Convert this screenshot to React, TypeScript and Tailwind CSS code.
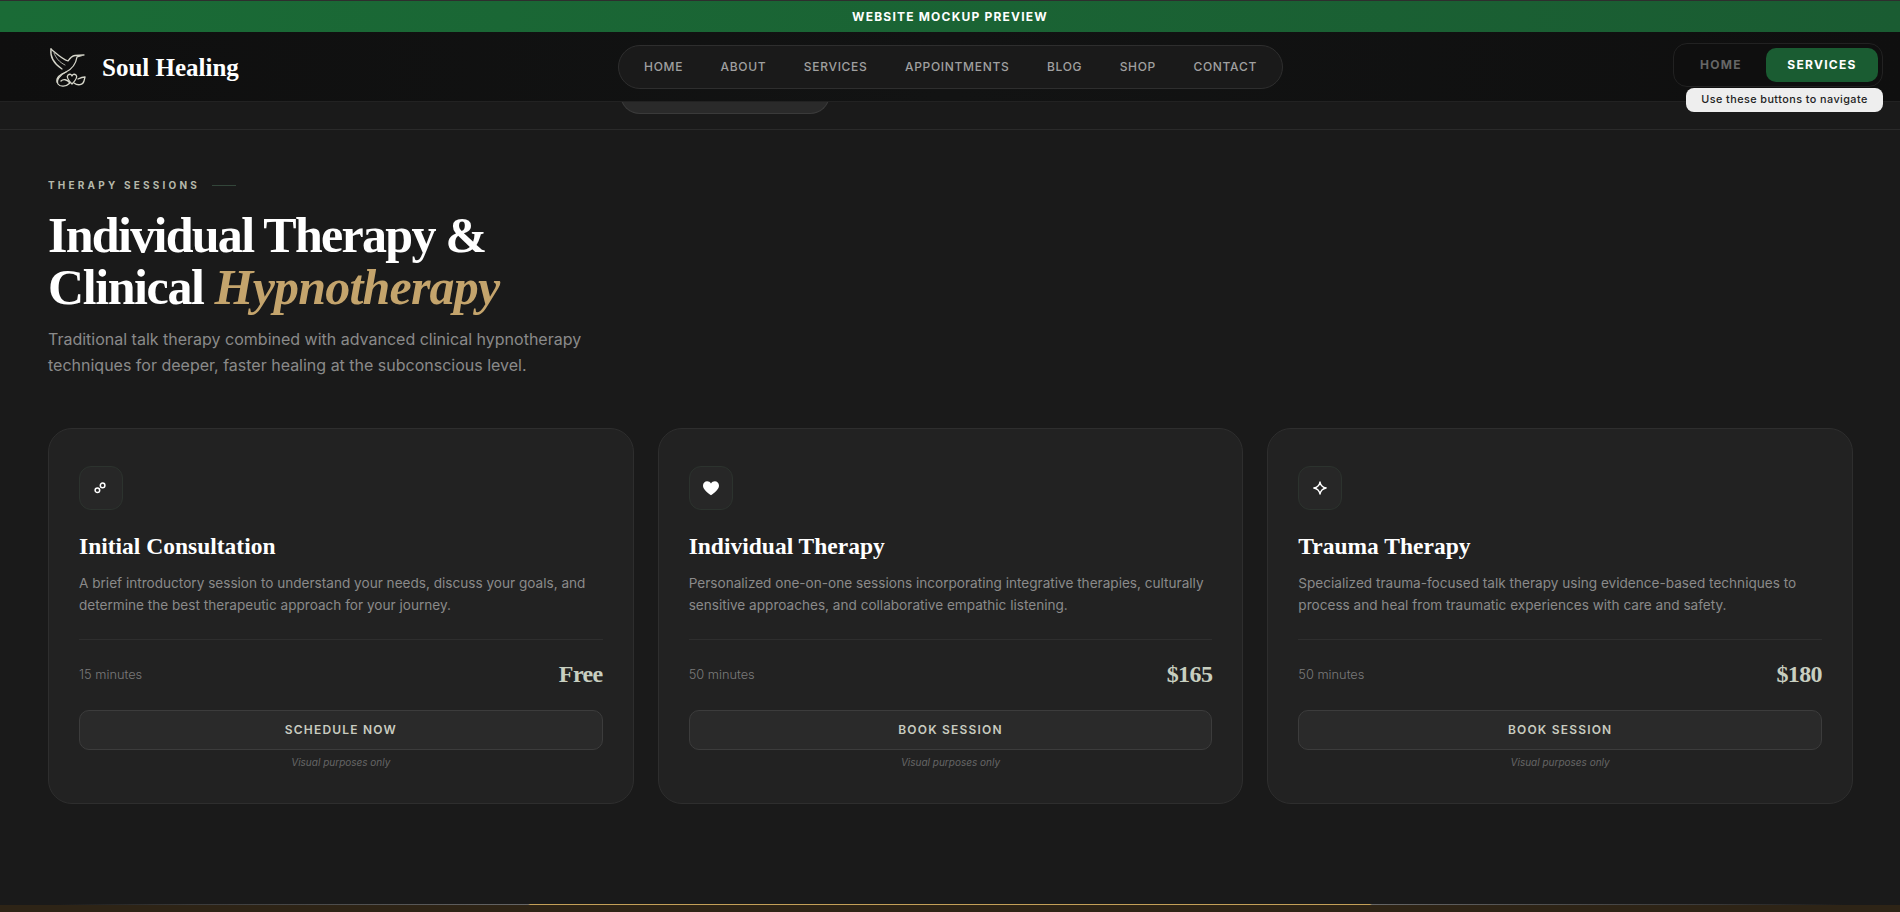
import React from "react";

const sans = "font-['Inter','Liberation_Sans',sans-serif]";
const serif = "font-['Liberation_Serif','Times_New_Roman',serif]";

function Logo() {
  return (
    <svg viewBox="18 16 40 40" className="w-[40px] h-[40px]" fill="none" stroke="#d6d6ca" strokeWidth="1.3" strokeLinecap="round" strokeLinejoin="round">
      <path d="M21 18 C27 23 32 28 38 30 C40 27 42 25 45 24.5 L54 24 L47 26 C46 32 42 38 36 41 C30 43 26 47 27 51" />
      <path d="M21 18 C20 25 23 32 32 38" />
      <path d="M24 22 C26 27 29 31 35 34" strokeWidth="0.8" />
      <path d="M42 53 C38 49 36 46 38 44 C40 42.5 41.5 43.5 42 45 C42.5 43.5 44 42.5 46 44 C48 46 46 49 42 53 Z" />
      <path d="M36 41 C30 44 26 49 28 53 C30 56 36 56 40 52 C37 48 33 48 31 50" />
      <path d="M44 52 C48 55 53 54 54 50 L55 46 C52 46 50 47 48 48" />
    </svg>
  );
}

function LinkIcon() {
  return (
    <svg viewBox="0 0 16 16" className="w-[16px] h-[16px] -translate-x-[1px]" fill="none" stroke="#ffffff" strokeWidth="1.5">
      <circle cx="5.4" cy="10.2" r="2.3" />
      <circle cx="10.6" cy="5.4" r="2.3" />
    </svg>
  );
}

function HeartIcon() {
  return (
    <svg viewBox="0 0 18 16" className="w-[18px] h-[16px]" fill="#ffffff">
      <path d="M9 15.2 C4 11.4 1 8.8 1 5.4 C1 2.9 3 1.2 5.1 1.2 C6.7 1.2 8.2 2 9 3.4 C9.8 2 11.3 1.2 12.9 1.2 C15 1.2 17 2.9 17 5.4 C17 8.8 14 11.4 9 15.2 Z" />
    </svg>
  );
}

function SparkIcon() {
  return (
    <svg viewBox="0 0 16 16" className="w-[16px] h-[16px]" fill="none" stroke="#ffffff" strokeWidth="1.3" strokeLinejoin="round">
      <path d="M8 1.8 C8.6 5.6 10.4 7.4 14.2 8 C10.4 8.6 8.6 10.4 8 14.2 C7.4 10.4 5.6 8.6 1.8 8 C5.6 7.4 7.4 5.6 8 1.8 Z" />
    </svg>
  );
}

const cards = [
  {
    icon: <LinkIcon />,
    title: "Initial Consultation",
    desc: ["A brief introductory session to understand your needs, discuss your goals, and", "determine the best therapeutic approach for your journey."],
    time: "15 minutes",
    price: "Free",
    cta: "SCHEDULE NOW",
  },
  {
    icon: <HeartIcon />,
    title: "Individual Therapy",
    desc: ["Personalized one-on-one sessions incorporating integrative therapies, culturally", "sensitive approaches, and collaborative empathic listening."],
    time: "50 minutes",
    price: "$165",
    cta: "BOOK SESSION",
  },
  {
    icon: <SparkIcon />,
    title: "Trauma Therapy",
    desc: ["Specialized trauma-focused talk therapy using evidence-based techniques to", "process and heal from traumatic experiences with care and safety."],
    time: "50 minutes",
    price: "$180",
    cta: "BOOK SESSION",
  },
];

const nav = ["HOME", "ABOUT", "SERVICES", "APPOINTMENTS", "BLOG", "SHOP", "CONTACT"];

export default function App() {
  return (
    <div className={`h-[912px] overflow-hidden flex flex-col bg-[#1a1a1a] ${sans}`}>
      <div className="h-[32px] shrink-0 border-t border-[#2e2e2e] bg-gradient-to-r from-[#1a6b36] to-[#1a5c32] flex items-center justify-center">
        <span className="text-[12px] font-bold tracking-[1.2px] text-white">WEBSITE MOCKUP PREVIEW</span>
      </div>

      <header className="relative z-10 h-[70px] shrink-0 bg-gradient-to-r from-[#0f0f0f] via-[#121313] to-[#0f0f0f] border-b border-[#222222] flex items-center pl-[48px] pr-[17px]">
        <div className="flex items-center gap-[14px] w-[570px]">
          <Logo />
          <span className={`${serif} text-[25px] font-bold text-white leading-none pt-[2px]`}>Soul Healing</span>
        </div>
        <nav className="h-[44px] w-[665px] rounded-[24px] border border-[#2e2e2e] bg-[#1a1a1a] flex items-center justify-between px-[25px]">
          {nav.map((n) => (
            <span key={n} className="text-[12px] font-medium tracking-[0.7px] text-[#a0a0a0]">{n}</span>
          ))}
        </nav>
        <div className="relative ml-auto mb-[3px] h-[44px] w-[210px] rounded-[14px] border border-[#222222] bg-[#0f0f0f] flex items-center justify-end pr-[4px]">
          <span className="w-[90px] text-center text-[12px] font-bold tracking-[1.3px] text-[#666666]">HOME</span>
          <span className="w-[112px] h-[34px] rounded-[10px] bg-[#1a5c32] flex items-center justify-center text-[12px] font-bold tracking-[1.3px] text-white">SERVICES</span>
          <div className="absolute -right-px top-[44px] w-[197px] h-[24px] rounded-[8px] bg-[#eeeeee] flex items-center justify-center text-[10.8px] font-medium tracking-[0.45px] text-[#222222]">
            Use these buttons to navigate
          </div>
        </div>
      </header>

      <div className="relative h-[28px] shrink-0 border-b border-[#2a2a2a]">
        <div className="absolute left-[620px] top-[-8px] w-[210px] h-[20px] rounded-b-[20px] bg-[#2a2a2a] border-b border-x border-[#3a3a3a]" />
      </div>

      <main className="flex-1 flex flex-col pl-[48px] pr-[47px] pt-[47px]">
        <div className="flex items-center gap-[12px] h-[16px]">
          <span className="text-[10px] font-bold tracking-[3.2px] text-[#b5b8aa]">THERAPY SESSIONS</span>
          <span className="w-[24px] h-px bg-[#33463a]" />
        </div>
        <h1 className={`${serif} mt-[16px] text-[50px] font-bold leading-[52px] text-white`}>
          <span className="tracking-[-1.7px]">Individual Therapy &amp;</span>
          <br />
          <span className="tracking-[-1.4px]">Clinical </span>
          <em className="text-[#c4a46c] tracking-[-0.8px]">Hypnotherapy</em>
        </h1>
        <p className="mt-[14px] text-[16px] leading-[25.6px] text-[#8a8a8a]">
          Traditional talk therapy combined with advanced clinical hypnotherapy
          <br />
          techniques for deeper, faster healing at the subconscious level.
        </p>

        <div className="mt-[50px] grid grid-cols-3 gap-[24px]">
          {cards.map((c) => (
            <article key={c.title} className="h-[376px] rounded-[24px] border border-[#2e2e2e] bg-[#222222] px-[30px] pt-[37px] flex flex-col">
              <div className="w-[44px] h-[44px] rounded-[12px] bg-[#272727] border border-[#2c332e] flex items-center justify-center">
                {c.icon}
              </div>
              <h3 className={`${serif} mt-[21px] text-[23.5px] font-bold leading-[30px] text-white`}>{c.title}</h3>
              <p className="mt-[11px] text-[13.6px] leading-[22px] text-[#8a8a8a] whitespace-nowrap">
                {c.desc[0]}
                <br />
                {c.desc[1]}
              </p>
              <div className="mt-[23px] h-px bg-[#2e2e2e]" />
              <div className="mt-[19px] h-[30px] flex items-center justify-between">
                <span className="text-[12.8px] font-light text-[#7a7a7a]">{c.time}</span>
                <span className={`${serif} text-[24px] font-bold text-[#c8cfc0] leading-none tracking-[-0.6px]`}>{c.price}</span>
              </div>
              <div className="mt-[21px] h-[40px] rounded-[10px] border border-[#3c3c3c] bg-[#2a2a2a] flex items-center justify-center text-[12px] font-semibold tracking-[1.2px] text-[#c9ccc0]">
                {c.cta}
              </div>
              <div className="mt-[5px] text-center text-[10px] italic text-[#666666]">Visual purposes only</div>
            </article>
          ))}
        </div>
      </main>

      <div className="h-[8px] shrink-0 bg-[#2e2416] flex flex-col">
        <div className="h-px bg-[linear-gradient(to_right,#1a1a1a_3%,#3a3a3a_10%,#666666_27.8%,#c4a058_27.9%,#c4a058_72.1%,#666666_72.2%,#3a3a3a_90%,#1a1a1a_97%)]" />
      </div>
    </div>
  );
}
